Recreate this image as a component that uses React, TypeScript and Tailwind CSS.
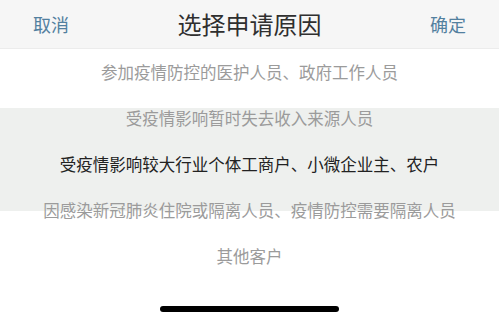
import React from "react";

const items = [
  { t: "参加疫情防控的医护人员、政府工作人员", active: false },
  { t: "受疫情影响暂时失去收入来源人员", active: false },
  { t: "受疫情影响较大行业个体工商户、小微企业主、农户", active: true },
  { t: "因感染新冠肺炎住院或隔离人员、疫情防控需要隔离人员", active: false },
  { t: "其他客户", active: false },
];

export default function App() {
  return (
    <div
      className="w-[499px] h-[323px] bg-white overflow-hidden flex flex-col"
      style={{ fontFamily: '"Noto Sans CJK SC", "Noto Sans", sans-serif' }}
    >
      <div className="h-[49px] bg-[#f6f6f6] border-b border-[#ececec] flex items-center justify-between px-[33px] relative">
        <span className="text-[18px] text-[#52809f] leading-none">取消</span>
        <span className="absolute left-0 right-0 text-center text-[24px] text-[#2f2f2f] leading-none pointer-events-none">
          选择申请原因
        </span>
        <span className="text-[18px] text-[#52809f] leading-none">确定</span>
      </div>
      <div className="relative flex flex-col">
        <div className="absolute left-0 right-0 top-[59px] h-[103px] bg-[#eef0ee]" />
        {items.map((it, i) => (
          <div
            key={i}
            className={`relative h-[46px] flex items-center justify-center text-[16.5px] leading-none whitespace-nowrap ${
              it.active ? "text-[#222222]" : "text-[#9b9b9b]"
            }`}
          >
            {it.t}
          </div>
        ))}
      </div>
      <div className="flex justify-center mt-[27px]">
        <div className="w-[179px] h-[6px] rounded-full bg-black" />
      </div>
    </div>
  );
}
